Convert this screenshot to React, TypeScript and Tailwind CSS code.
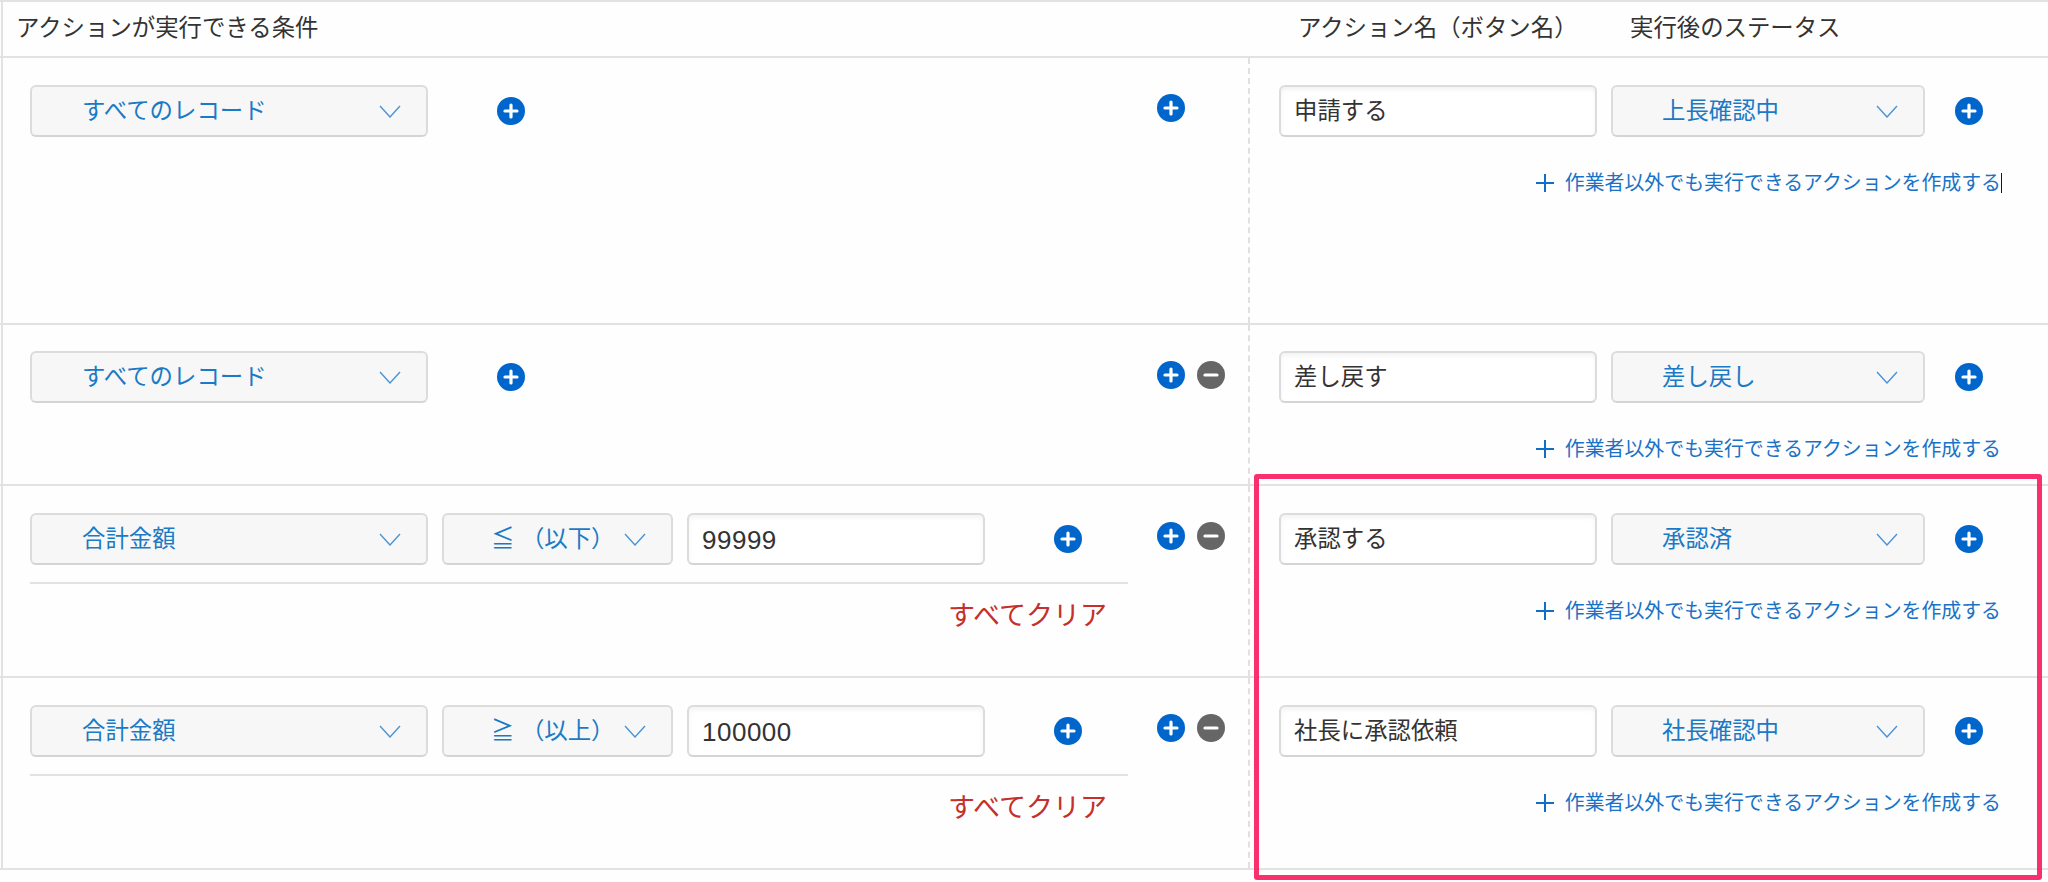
const font = { fontFamily: '"Liberation Sans", "Noto Sans CJK JP", sans-serif' };

function Chevron() {
  return (
    <svg width="22" height="13" viewBox="0 0 22 13" fill="none" className="shrink-0">
      <path d="M1 1 L11 12 L21 1" stroke="#4a94d6" strokeWidth="1.4" />
    </svg>
  );
}

function RoundButton({ kind = "plus" }: { kind?: "plus" | "minus" }) {
  return (
    <svg width="28" height="28" viewBox="0 0 28 28" className="shrink-0">
      <circle cx="14" cy="14" r="14" fill={kind === "plus" ? "#0066cc" : "#666666"} />
      <path d="M8 14 H20" stroke="white" strokeWidth="3.2" strokeLinecap="round" />
      {kind === "plus" && <path d="M14 8 V20" stroke="white" strokeWidth="3.2" strokeLinecap="round" />}
    </svg>
  );
}

function SelectBox({ label, width, pad = "pl-[49px]" }: { label: string; width: string; pad?: string }) {
  return (
    <div className={`${width} ${pad} h-[52px] shrink-0 flex items-center justify-between pr-[25px] rounded-[6px] border-2 border-[#dcdcdc] border-b-[#d4d4d4] bg-[#f7f7f7] text-[23.4px] text-[#1a7ac6] whitespace-pre`}>
      <span className="pt-[2px]">{label}</span>
      <Chevron />
    </div>
  );
}

function TextBox({ value, width, numeric }: { value: string; width: string; numeric?: boolean }) {
  return (
    <div className={`${width} h-[52px] shrink-0 flex items-center pl-[13px] pt-[2px] rounded-[6px] border-2 border-[#dcdcdc] border-b-[#d4d4d4] bg-white shadow-[inset_0_3px_4px_rgba(0,0,0,0.05)] text-[#333333] ${numeric ? "text-[26px] tracking-[0.5px]" : "text-[23.4px]"}`}>
      {value}
    </div>
  );
}

type Filter = { field: string; op: string; value: string };

type Row = {
  height: string;
  top: string;
  filter?: Filter;
  removable: boolean;
  name: string;
  status: string;
  caret?: boolean;
};

const rows: Row[] = [
  { height: "h-[267px]", top: "pt-[27px]", removable: false, name: "申請する", status: "上長確認中", caret: true },
  { height: "h-[161px]", top: "pt-[26px]", removable: true, name: "差し戻す", status: "差し戻し" },
  {
    height: "h-[192px]",
    top: "pt-[27px]",
    filter: { field: "合計金額", op: "≦ （以下）", value: "99999" },
    removable: true,
    name: "承認する",
    status: "承認済",
  },
  {
    height: "h-[192px]",
    top: "pt-[27px]",
    filter: { field: "合計金額", op: "≧ （以上）", value: "100000" },
    removable: true,
    name: "社長に承認依頼",
    status: "社長確認中",
  },
];

function ActionRow({ row }: { row: Row }) {
  return (
    <div className={`${row.height} flex border-b-2 border-[#e2e2e2]`}>
      {/* Conditions */}
      <div className={`ml-[1px] w-[1135px] shrink-0 border-l-2 border-[#e2e2e2] pl-[27px] pr-[8px] ${row.top}`}>
        {row.filter ? (
          <>
            <div className="flex items-center">
              <SelectBox label={row.filter.field} width="w-[398px]" pad="pl-[50px]" />
              <div className="w-[14px] shrink-0" />
              <SelectBox label={row.filter.op} width="w-[231px]" pad="pl-[47px]" />
              <div className="w-[14px] shrink-0" />
              <TextBox value={row.filter.value} width="w-[298px]" numeric />
              <div className="ml-[69px]">
                <RoundButton />
              </div>
            </div>
            <div className="mt-[17px] border-t-2 border-[#e2e2e2] pt-[16px] pr-[21px] text-right text-[27px] leading-[32px] text-[#c62f2b]">
              すべてクリア
            </div>
          </>
        ) : (
          <div className="flex items-center">
            <SelectBox label="すべてのレコード" width="w-[398px]" pad="pl-[50px]" />
            <div className="ml-[69px]">
              <RoundButton />
            </div>
          </div>
        )}
      </div>

      {/* Add / remove row */}
      <div className="w-[112px] shrink-0 pl-[21px] pt-[36px]">
        <div className="flex gap-[12px]">
          <RoundButton />
          {row.removable && <RoundButton kind="minus" />}
        </div>
      </div>

      {/* Action */}
      <div className={`flex-1 border-l-2 border-dashed border-[#e0e0e0] pl-[29px] ${row.top}`}>
        <div className="flex items-center">
          <TextBox value={row.name} width="w-[318px]" />
          <div className="w-[14px] shrink-0" />
          <SelectBox label={row.status} width="w-[314px]" />
          <div className="ml-[30px]">
            <RoundButton />
          </div>
        </div>
        <div className="mt-[32px] pr-[47px] flex items-center justify-end gap-[11px] text-[19.9px] leading-[28px] text-[#1a72c6]">
          <svg width="18" height="18" viewBox="0 0 18 18" className="shrink-0">
            <path d="M0 9 H18 M9 0 V18" stroke="#0f6fc6" strokeWidth="2" />
          </svg>
          <span className="relative">
            作業者以外でも実行できるアクションを作成する
            {row.caret && <span className="absolute right-[-1px] top-[4px] h-[20px] w-px bg-[#1a1a1a]" />}
          </span>
        </div>
      </div>
    </div>
  );
}

export default function App() {
  return (
    <div className="relative h-[882px] overflow-hidden bg-[#fefefe]" style={font}>
      <div className="border-t-2 border-[#e2e2e2]">
        <div className="h-[56px] flex border-b-2 border-[#e2e2e2] text-[23.4px] text-[#333333]">
          <div className="ml-[1px] flex flex-1 items-center border-l-2 border-[#e2e2e2] pl-[13px]">
            <div className="w-[1282px] shrink-0">アクションが実行できる条件</div>
            <div className="w-[332px] shrink-0">アクション名（ボタン名）</div>
            <div>実行後のステータス</div>
          </div>
        </div>
        {rows.map((row) => (
          <ActionRow key={row.name} row={row} />
        ))}
      </div>

      {/* Highlight frame */}
      <div className="absolute left-[1254px] top-[474px] h-[406px] w-[788px] rounded-[3px] border-[5px] border-[#f9306e]" />
    </div>
  );
}
